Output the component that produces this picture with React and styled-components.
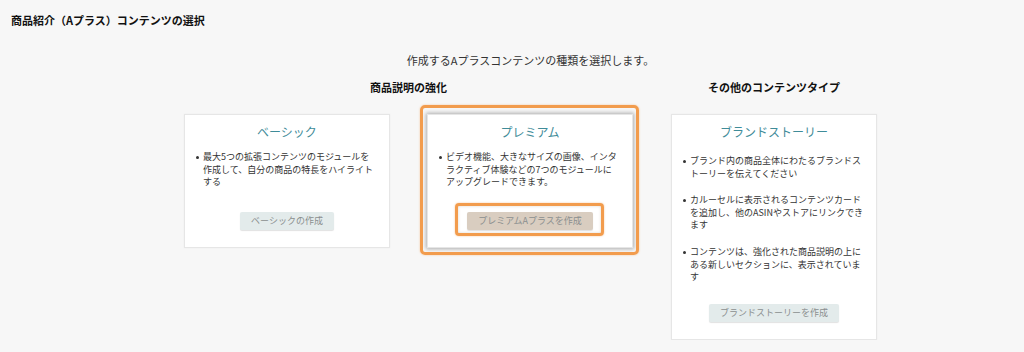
import React from "react";
import styled, { createGlobalStyle } from "styled-components";

const GlobalStyle = createGlobalStyle`
  body {
    margin: 0;
    background: #f7f7f7;
    font-family: "Noto Sans CJK JP", "Noto Sans", sans-serif;
    color: #333;
  }
`;

// each bullet is given as its wrapped lines, as shown in the screen
const groups = [
  {
    heading: "商品説明の強化",
    cards: [
      {
        title: "ベーシック",
        items: [["最大5つの拡張コンテンツのモジュールを", "作成して、自分の商品の特長をハイライト", "する"]],
        button: "ベーシックの作成",
      },
      {
        title: "プレミアム",
        items: [["ビデオ機能、大きなサイズの画像、インタ", "ラクティブ体験などの7つのモジュールに", "アップグレードできます。"]],
        button: "プレミアムAプラスを作成",
        highlight: true,
      },
    ],
  },
  {
    heading: "その他のコンテンツタイプ",
    cards: [
      {
        title: "ブランドストーリー",
        items: [
          ["ブランド内の商品全体にわたるブランドス", "トーリーを伝えてください"],
          ["カルーセルに表示されるコンテンツカード", "を追加し、他のASINやストアにリンクでき", "ます"],
          ["コンテンツは、強化された商品説明の上に", "ある新しいセクションに、表示されていま", "す"],
        ],
        button: "ブランドストーリーを作成",
        spaced: true,
      },
    ],
  },
];

export default function App() {
  return (
    <>
      <GlobalStyle />
      <PageTitle>商品紹介（Aプラス）コンテンツの選択</PageTitle>
      <Main>
        <Intro>作成するAプラスコンテンツの種類を選択します。</Intro>
        <Groups>
          {groups.map((group) => (
            <Group key={group.heading}>
              <GroupHeading>{group.heading}</GroupHeading>
              <CardRow>
                {group.cards.map((card) => (
                  <Card key={card.title} $highlight={card.highlight}>
                    <CardTitle>{card.title}</CardTitle>
                    <BulletList $spaced={card.spaced}>
                      {card.items.map((lines) => (
                        <Bullet key={lines[0]}>
                          {lines.map((line, i) => (
                            <React.Fragment key={i}>
                              {i > 0 && <br />}
                              {line}
                            </React.Fragment>
                          ))}
                        </Bullet>
                      ))}
                    </BulletList>
                    <CreateButton $highlight={card.highlight}>{card.button}</CreateButton>
                  </Card>
                ))}
              </CardRow>
            </Group>
          ))}
        </Groups>
      </Main>
    </>
  );
}

const PageTitle = styled.h1`
  margin: 0;
  padding: 12px 11px 0;
  font-size: 11px;
  line-height: 16px;
  font-weight: 700;
  color: #111;
`;

const Main = styled.main`
  display: flex;
  flex-direction: column;
  align-items: center;
  padding-left: 37px;
`;

const Intro = styled.p`
  margin: 24px 0 0;
  font-size: 11px;
  line-height: 16px;
  color: #333;
`;

const Groups = styled.div`
  display: flex;
  gap: 38px;
  margin-top: 11px;
  align-items: flex-start;
`;

const Group = styled.section`
  display: flex;
  flex-direction: column;
  align-items: center;
`;

const GroupHeading = styled.h2`
  margin: 0 0 19px;
  font-size: 11px;
  line-height: 16px;
  font-weight: 700;
  color: #111;
`;

const CardRow = styled.div`
  display: flex;
  gap: 37px;
  align-items: flex-start;
`;

const Card = styled.div`
  position: relative;
  box-sizing: border-box;
  width: 206px;
  display: flex;
  flex-direction: column;
  align-items: center;
  padding: 9px 0 17px;
  background: #fff;
  border: 1px solid #e6e6e6;
  box-shadow: ${(p) => (p.$highlight ? "0 0 4px 1px rgba(0,0,0,0.3)" : "0 0 2px rgba(0,0,0,0.04)")};

  &::after {
    content: "";
    display: ${(p) => (p.$highlight ? "block" : "none")};
    position: absolute;
    inset: -10px -7px -8px -8px;
    border: 3px solid #f29c4d;
    border-radius: 5px;
    box-shadow: 0 0 2px rgba(242, 156, 77, 0.6);
    pointer-events: none;
  }
`;

const CardTitle = styled.h3`
  margin: 0;
  font-size: 12px;
  line-height: 16px;
  font-weight: 400;
  color: #3f8c99;
`;

const BulletList = styled.ul`
  list-style: none;
  align-self: stretch;
  margin: ${(p) => (p.$spaced ? "15px 0 20px" : "11px 0 23px")};
  padding: 0 6px 0 11px;
  display: flex;
  flex-direction: column;
  gap: ${(p) => (p.$spaced ? "14px" : "0")};
`;

const Bullet = styled.li`
  position: relative;
  padding-left: 7px;
  font-size: 9px;
  line-height: 12.6px;
  color: #333;
  white-space: nowrap;

  &::before {
    content: "";
    position: absolute;
    left: 0;
    top: 5px;
    width: 3px;
    height: 3px;
    border-radius: 50%;
    background: #333;
  }
`;

const CreateButton = styled.button`
  position: relative;
  height: 18px;
  padding: 0 11px;
  border: none;
  border-radius: 2px;
  background: ${(p) => (p.$highlight ? "#d9cdc0" : "#e3ebeb")};
  box-shadow: 0 1px 1px rgba(0, 0, 0, 0.12);
  font-family: inherit;
  font-size: 9px;
  line-height: 18px;
  color: #8b8f8f;
  white-space: nowrap;

  &::after {
    content: "";
    display: ${(p) => (p.$highlight ? "block" : "none")};
    position: absolute;
    inset: -9px -11px -6px -12px;
    border: 3px solid #f29c4d;
    border-radius: 4px;
    box-shadow: 0 0 2px rgba(242, 156, 77, 0.6), inset 0 0 3px rgba(120, 90, 60, 0.25);
    pointer-events: none;
  }
`;
